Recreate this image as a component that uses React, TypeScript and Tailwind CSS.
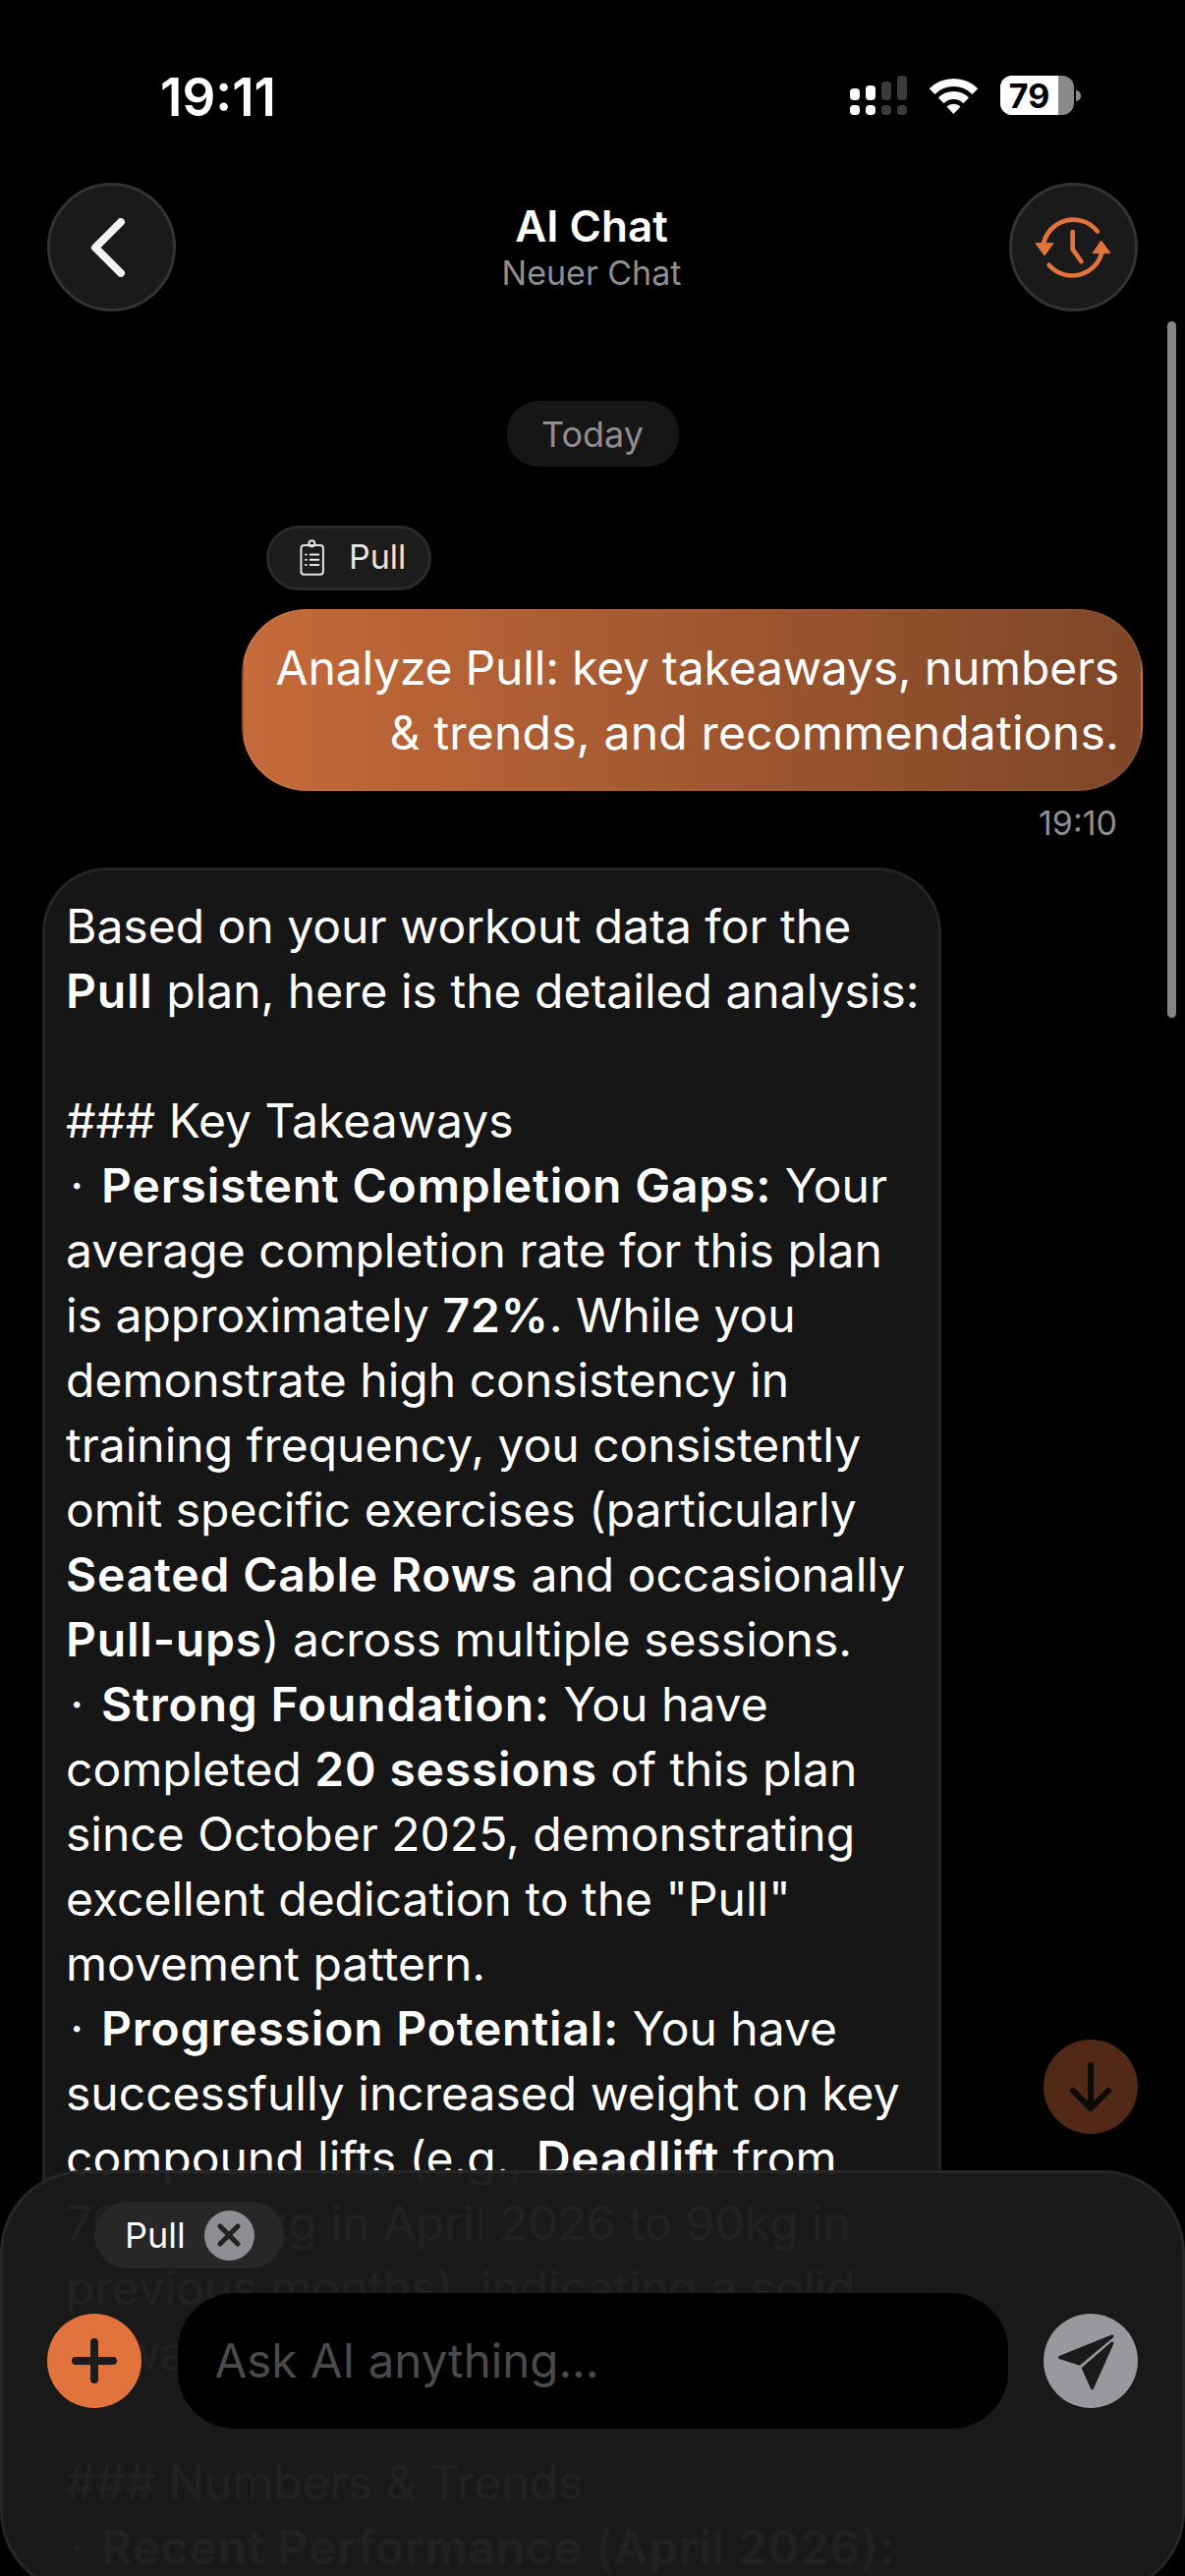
const MESSAGE_LINES = [
  'Based on your workout data for the',
  '**Pull** plan, here is the detailed analysis:',
  '',
  '### Key Takeaways',
  '\u200A·\u200A **Persistent Completion Gaps:** Your',
  'average completion rate for this plan',
  'is approximately **72%**. While you',
  'demonstrate high consistency in',
  'training frequency, you consistently',
  'omit specific exercises (particularly',
  '**Seated Cable Rows** and occasionally',
  '**Pull-ups**) across multiple sessions.',
  '\u200A·\u200A **Strong Foundation:** You have',
  'completed **20 sessions** of this plan',
  'since October 2025, demonstrating',
  'excellent dedication to the "Pull"',
  'movement pattern.',
  '\u200A·\u200A **Progression Potential:** You have',
  'successfully increased weight on key',
  'compound lifts (e.g., **Deadlift** from',
  '70 to 80 kg in April 2026 to 90kg in',
  'previous months), indicating a solid',
  'upward trajectory.',
  '',
  '### Numbers & Trends',
  '\u200A·\u200A **Recent Performance (April 2026):**',
]

function MessageLine({ text }: { text: string }) {
  if (!text) return <div className="h-[66px]" />
  return (
    <div className="h-[66px] whitespace-nowrap">
      {text.split('**').map((part, i) =>
        i % 2 === 1 ? (
          <span key={i} className="font-semibold tracking-[0.8px]">
            {part}
          </span>
        ) : (
          <span key={i}>{part}</span>
        ),
      )}
    </div>
  )
}

function StatusBar() {
  return (
    <div className="flex h-[186px] items-start justify-between pl-[163px] pr-[106px] pt-[69px]">
      <span className="text-[53px] font-semibold leading-[60px] text-white">19:11</span>
      <div className="mt-[8px] flex items-start">
        {/* cell signal */}
        <svg width="58" height="40" viewBox="0 0 58 40" className="mr-[23px]">
          <rect x="0" y="13" width="10" height="12" rx="4" fill="#fff" />
          <rect x="16" y="10" width="10" height="15" rx="4" fill="#fff" />
          <rect x="32" y="6" width="10" height="19" rx="4" fill="#3a3a3a" />
          <rect x="48" y="0" width="10" height="25" rx="4" fill="#3a3a3a" />
          <rect x="0" y="30" width="10" height="10" rx="4" fill="#fff" />
          <rect x="16" y="30" width="10" height="10" rx="4" fill="#fff" />
          <rect x="32" y="30" width="10" height="10" rx="4" fill="#3a3a3a" />
          <rect x="48" y="30" width="10" height="10" rx="4" fill="#3a3a3a" />
        </svg>
        {/* wifi */}
        <svg width="49" height="38" viewBox="0 0 49 38" className="mr-[23px] mt-[2px]">
          <path d="M2.600 14.100a31 31 0 0 1 43.800 0" fill="none" stroke="#fff" strokeWidth="8" />
          <path d="M11.800 23.300a18 18 0 0 1 25.400 0" fill="none" stroke="#fff" strokeWidth="8" />
          <path d="M17.500 29.500a10 10 0 0 1 14 0L24.500 37z" fill="#fff" />
        </svg>
        {/* battery */}
        <div className="relative flex h-[40px] w-[75px] items-center overflow-hidden rounded-[12px] bg-[#8a8a8a]">
          <div className="flex h-full w-[59px] items-center justify-center bg-white text-[34px] font-bold text-black">
            79
          </div>
        </div>
        <div className="ml-[2px] mt-[15px] h-[11px] w-[5px] rounded-r-full bg-[#8a8a8a]" />
      </div>
    </div>
  )
}

function Header() {
  return (
    <div className="flex items-center justify-between px-[48px]">
      <button className="flex h-[131px] w-[131px] items-center justify-center rounded-full border-[3px] border-[#333333] bg-[#1a1a1a]">
        <svg width="36" height="60" viewBox="0 0 36 60" className="mr-[8px]">
          <path d="M31 4 5 30l26 26" fill="none" stroke="#f2f2f2" strokeWidth="8" strokeLinecap="round" strokeLinejoin="round" />
        </svg>
      </button>
      <div className="flex flex-col items-center pr-[2px]">
        <span className="text-[44px] font-semibold leading-[50px] text-white">AI Chat</span>
        <span className="mt-[2px] text-[34px] leading-[42px] text-[#8e8e93]">Neuer Chat</span>
      </div>
      <button className="flex h-[131px] w-[131px] items-center justify-center rounded-full border-[3px] border-[#333333] bg-[#1a1a1a]">
        <svg width="80" height="70" viewBox="158 140 240 210">
          <path d="M352 195a93 93 0 0 0-165 45M205 298a93 93 0 0 0 162-43" fill="none" stroke="#e2733c" strokeWidth="14" strokeLinecap="round" />
          <path d="M277 197v53l26 37" fill="none" stroke="#e2733c" strokeWidth="14" strokeLinecap="round" strokeLinejoin="round" />
          <path d="M164 232h54l-27 37zM338 262h54l-28-38z" fill="#e2733c" stroke="#e2733c" strokeWidth="3" strokeLinejoin="round" />
        </svg>
      </button>
    </div>
  )
}

function Composer() {
  return (
    <div className="absolute bottom-[-18px] left-0 right-0 h-[431px] rounded-[84px] border-[3px] border-[#262626] bg-[#1a1a1a]/97 pl-[45px] pr-[45px] pt-[29px]">
      <div className="ml-[48px] flex h-[68px] w-[193px] items-center rounded-full bg-[#272727] pl-[31px]">
        <span className="text-[36px] leading-none text-white">Pull</span>
        <span className="ml-[19px] flex h-[51px] w-[51px] items-center justify-center rounded-full bg-[#8e8e93]">
          <svg width="24" height="24" viewBox="0 0 24 24">
            <path d="M3 3l18 18M21 3 3 21" stroke="#222" strokeWidth="5" strokeLinecap="round" />
          </svg>
        </span>
      </div>
      <div className="mt-[25px] flex items-center justify-between">
        <button className="flex h-[96px] w-[96px] items-center justify-center rounded-full bg-[#e2733c]">
          <svg width="46" height="46" viewBox="0 0 46 46">
            <path d="M23 4v38M4 23h38" stroke="#1c1c1c" strokeWidth="8" strokeLinecap="round" />
          </svg>
        </button>
        <div className="flex h-[138px] w-[845px] items-center rounded-[58px] bg-black pl-[38px] text-[47.500px] text-[#4a4a4c]">
          Ask AI anything...
        </div>
        <button className="flex h-[96px] w-[96px] items-center justify-center rounded-full bg-[#98989d]">
          <svg width="96" height="96" viewBox="0 0 96 96">
            <path d="M70 23 16.500 44.500 36.500 51z" fill="#1a1a1a" stroke="#1a1a1a" strokeWidth="3" strokeLinejoin="round" />
            <path d="M70 30 49.500 76 40.400 55.600z" fill="#1a1a1a" stroke="#1a1a1a" strokeWidth="3" strokeLinejoin="round" />
          </svg>
        </button>
      </div>
    </div>
  )
}

export default function App() {
  return (
    <div className="relative h-[2622px] w-[1206px] overflow-hidden bg-black font-[Inter,sans-serif] text-white">
      <StatusBar />
      <Header />

      <div className="flex flex-col px-[43px]">
        <div className="mt-[91px] flex justify-center">
          <div className="flex h-[67px] w-[175px] items-center justify-center rounded-[32px] bg-[#161616] text-[36px] text-[#8e8e93]">
            Today
          </div>
        </div>

        <div className="ml-[228px] mt-[60px] flex h-[66px] w-[168px] items-center rounded-full border-[3px] border-[#2a2a2a] bg-[#1c1c1c] pl-[29px] text-[#e5e5e5]">
          <svg width="30" height="38" viewBox="180 90 90 115">
            <rect x="190" y="108" width="68" height="90" rx="9" fill="none" stroke="#e5e5e5" strokeWidth="6" />
            <circle cx="223" cy="103" r="9" fill="none" stroke="#e5e5e5" strokeWidth="6" />
            <path d="M204 137h2M218 137h26M204 153h2M218 153h26M204 169h2M218 169h26" fill="none" stroke="#e5e5e5" strokeWidth="6" strokeLinecap="round" />
          </svg>
          <span className="ml-[22px] -translate-y-[1px] text-[34px] leading-none">Pull</span>
        </div>

        <div className="ml-[203px] mt-[19px] h-[185px] w-[917px] rounded-[66px] border-[2px] border-white/5 bg-gradient-to-r from-[#c66a3a] to-[#7d4627] pb-[24px] pr-[22px] pt-[25px] text-right text-[48px] leading-[66px]">
          <div className="whitespace-nowrap tracking-[-0.19px]">Analyze Pull: key takeaways, numbers</div>
          <div className="whitespace-nowrap tracking-[0.22px]">&amp; trends, and recommendations.</div>
        </div>

        <div className="mr-[26px] mt-[13px] h-[40px] text-right text-[34px] leading-[40px] text-[#8e8e93]">19:10</div>

        <div className="mt-[25px] w-[915px] rounded-t-[66px] border-[3px] border-b-0 border-[#242424] bg-[#161616] pb-[200px] pl-[21px] pt-[24px] text-[48px] leading-[66px]">
          {MESSAGE_LINES.map((line, i) => (
            <MessageLine key={i} text={line} />
          ))}
        </div>
      </div>

      {/* scroll indicator */}
      <div className="absolute left-[1188px] top-[327px] h-[709px] w-[9px] rounded-full bg-[#858585]" />

      {/* jump to bottom */}
      <button className="absolute left-[1062px] top-[2076px] flex h-[96px] w-[96px] items-center justify-center rounded-full bg-[#512916]">
        <svg width="44" height="50" viewBox="0 0 44 50">
          <path d="M22 3v44M4 29l18 18 18-18" fill="none" stroke="#0b0b0b" strokeWidth="6" strokeLinecap="round" strokeLinejoin="round" />
        </svg>
      </button>

      <Composer />
    </div>
  )
}
